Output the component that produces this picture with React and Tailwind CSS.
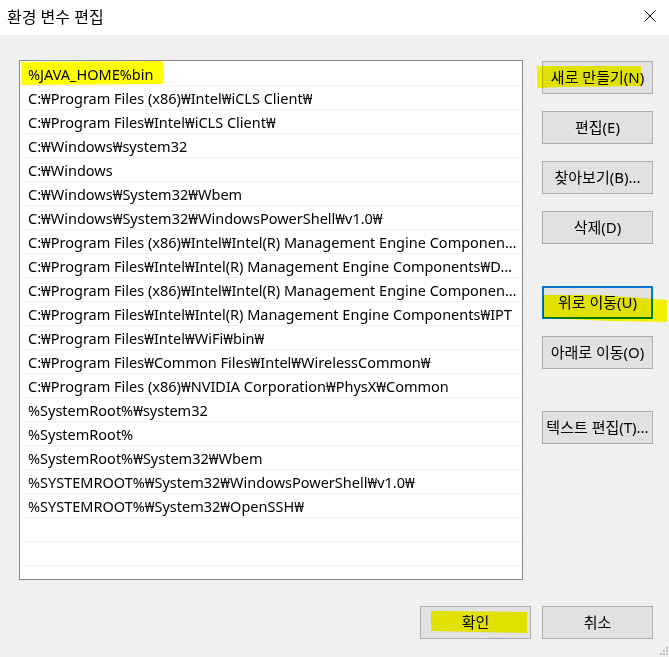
import React from "react";

const rows = [
  "%JAVA_HOME%bin",
  "C:₩Program Files (x86)₩Intel₩iCLS Client₩",
  "C:₩Program Files₩Intel₩iCLS Client₩",
  "C:₩Windows₩system32",
  "C:₩Windows",
  "C:₩Windows₩System32₩Wbem",
  "C:₩Windows₩System32₩WindowsPowerShell₩v1.0₩",
  "C:₩Program Files (x86)₩Intel₩Intel(R) Management Engine Components₩DAL",
  "C:₩Program Files₩Intel₩Intel(R) Management Engine Components₩DAL",
  "C:₩Program Files (x86)₩Intel₩Intel(R) Management Engine Components₩IPT",
  "C:₩Program Files₩Intel₩Intel(R) Management Engine Components₩IPT",
  "C:₩Program Files₩Intel₩WiFi₩bin₩",
  "C:₩Program Files₩Common Files₩Intel₩WirelessCommon₩",
  "C:₩Program Files (x86)₩NVIDIA Corporation₩PhysX₩Common",
  "%SystemRoot%₩system32",
  "%SystemRoot%",
  "%SystemRoot%₩System32₩Wbem",
  "%SYSTEMROOT%₩System32₩WindowsPowerShell₩v1.0₩",
  "%SYSTEMROOT%₩System32₩OpenSSH₩",
  "",
  "",
  "",
];

function Btn({ children, focused, className = "" }) {
  return (
    <div
      className={
        "w-[111px] h-[33px] flex items-center justify-center bg-[#e1e1e1] text-[15px] text-black whitespace-nowrap " +
        (focused ? "border-2 border-[#0078d7] " : "border border-[#adadad] ") +
        className
      }
    >
      {children}
    </div>
  );
}

export default function App() {
  return (
    <div
      className="relative w-[669px] h-[657px] bg-[#f0f0f0] overflow-hidden text-black"
      style={{ fontFamily: '"Noto Sans", "Noto Sans CJK KR", sans-serif' }}
    >
      <div className="h-[35px] bg-white flex items-center justify-between pl-[7px] pr-[13px]">
        <span className="text-[16px] leading-none pb-[2px]">환경 변수 편집</span>
        <svg width="12" height="12" viewBox="0 0 12 12" className="mb-[3px]">
          <path d="M0.5 0.5 L11.5 11.5 M11.5 0.5 L0.5 11.5" stroke="#000" strokeWidth="1" fill="none" />
        </svg>
      </div>

      <div className="flex pt-[25px] pl-[19px]">
        <div className="w-[504px] h-[520px] border border-[#828790] bg-white pt-[1px] overflow-hidden">
          {rows.map((r, i) => (
            <div
              key={i}
              className="h-[24px] border-b border-[#f0f0f0] flex items-center pl-[7px] pr-[4px] mx-[1px]"
            >
              <span className="block overflow-hidden text-ellipsis whitespace-nowrap text-[14.5px] leading-[20px]">
                {r}
              </span>
            </div>
          ))}
        </div>

        <div className="ml-[19px] pt-[1px] flex flex-col">
          <Btn>새로 만들기(N)</Btn>
          <Btn className="mt-[17px]">편집(E)</Btn>
          <Btn className="mt-[17px]">찾아보기(B)...</Btn>
          <Btn className="mt-[17px]">삭제(D)</Btn>
          <Btn focused className="mt-[42px]">위로 이동(U)</Btn>
          <Btn className="mt-[17px]">아래로 이동(O)</Btn>
          <Btn className="mt-[42px]">텍스트 편집(T)...</Btn>
        </div>
      </div>

      <div className="flex justify-end gap-[11px] pt-[26px] pr-[16px]">
        <Btn>확인</Btn>
        <Btn>취소</Btn>
      </div>

      <svg className="absolute right-0 bottom-0" width="12" height="11" viewBox="0 0 12 11">
        <rect x="9" y="1" width="2" height="2" fill="#bfbfbf" />
        <rect x="6" y="4" width="2" height="2" fill="#bfbfbf" />
        <rect x="9" y="4" width="2" height="2" fill="#bfbfbf" />
        <rect x="3" y="7" width="2" height="2" fill="#bfbfbf" />
        <rect x="6" y="7" width="2" height="2" fill="#bfbfbf" />
        <rect x="9" y="7" width="2" height="2" fill="#bfbfbf" />
      </svg>

      <svg
        className="absolute left-0 top-0 pointer-events-none mix-blend-multiply"
        width="669"
        height="657"
        viewBox="0 0 669 657"
      >
        <g fill="#ffff00">
          <polygon points="21,62 163,61 163,84 21,85" />
          <polygon points="537,66 641,66 641,86 563,87 537,88" />
          <polygon points="543,295 600,295 667,300 667,322 610,321 543,318" />
          <polygon points="431,611 527,612 527,633 431,631" />
        </g>
      </svg>
    </div>
  );
}
